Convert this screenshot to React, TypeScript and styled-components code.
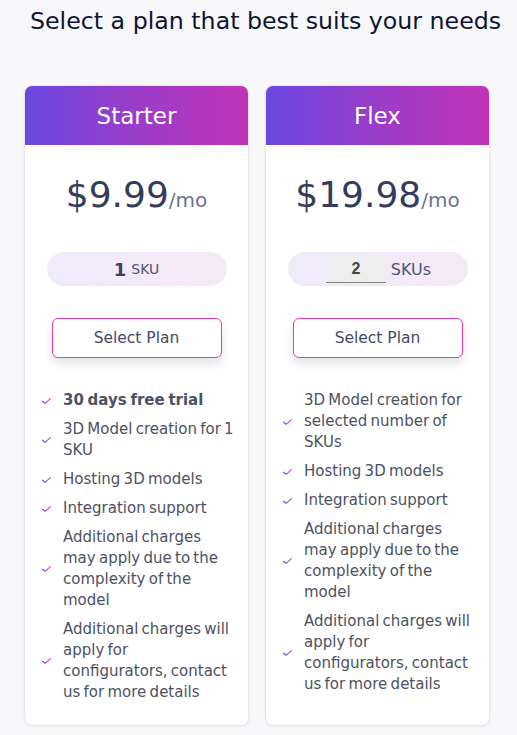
import React from "react";
import styled, { createGlobalStyle } from "styled-components";

const GlobalStyle = createGlobalStyle`
  html, body { margin: 0; padding: 0; background: #f8f8fb; }
  body { font-family: "DejaVu Sans", "Liberation Sans", sans-serif; }
  * { box-sizing: border-box; }
`;

const Page = styled.div`
  width: 517px;
  min-height: 735px;
  background: #f8f8fb;
  padding: 4px 0 11px;
`;

const Title = styled.h1`
  margin: 0 0 0 30px;
  font-size: 23.7px;
  font-weight: 400;
  color: #0d1433;
  line-height: 34px;
  white-space: nowrap;
`;

const Grid = styled.div`
  display: grid;
  grid-template-columns: 225px 225px;
  gap: 16px;
  margin: 47px 0 0 24px;
`;

const Card = styled.div`
  background: #ffffff;
  border: 1px solid #e6e7ec;
  border-radius: 8px;
  box-shadow: 0 1px 3px rgba(15, 23, 42, 0.06);
  overflow: hidden;
  display: flex;
  flex-direction: column;
`;

const Header = styled.div`
  height: 59px;
  background: linear-gradient(90deg, #6a48e0 0%, #9b3cc9 50%, #c234b6 100%);
  color: #ffffff;
  font-size: 23px;
  display: flex;
  align-items: center;
  justify-content: center;
`;

const Price = styled.div`
  margin-top: 28px;
  text-align: center;
  color: #333d5a;
  font-size: 36px;
  line-height: 44px;
  white-space: nowrap;
`;

const Per = styled.span`
  font-size: 20px;
  line-height: 1;
  color: #6b7490;
`;

const Pill = styled.div`
  margin: 35px auto 0;
  width: 180px;
  height: 34px;
  border-radius: 17px;
  background: linear-gradient(90deg, #efebfb 0%, #f6e9f7 100%);
  display: flex;
  align-items: center;
  justify-content: center;
  gap: 5px;
`;

const SkuCount = styled.span`
  font-size: 18px;
  font-weight: 700;
  color: #3a4260;
`;

const SkuLabel = styled.span<{ $size: number }>`
  font-size: ${(p) => p.$size}px;
  color: #4d5573;
`;

const SkuInput = styled.div`
  width: 60px;
  height: 27px;
  background: #eeeeee;
  border-bottom: 1px solid #808080;
  display: flex;
  align-items: center;
  justify-content: center;
  font-family: "Liberation Sans", Arial, sans-serif;
  font-weight: 700;
  font-size: 16px;
  color: #444444;
  margin-left: 2px;
`;

const SelectButton = styled.button`
  display: block;
  margin: 32px auto 0;
  width: 170px;
  height: 40px;
  background: #ffffff;
  border: 1px solid #e03cbd;
  border-radius: 6px;
  box-shadow: 0 6px 10px rgba(30, 30, 60, 0.12);
  font-family: inherit;
  font-size: 15.5px;
  color: #434a66;
  cursor: pointer;
`;

const List = styled.ul`
  list-style: none;
  margin: 32px 0 0;
  padding: 0 12.5px 22px 17px;
  display: flex;
  flex-direction: column;
  gap: 8px;
`;

const Item = styled.li<{ $bold?: boolean }>`
  display: flex;
  align-items: center;
  gap: 12px;
  font-size: 15px;
  line-height: 21px;
  word-spacing: -1.5px;
  color: #4d5262;
  font-weight: ${(p) => (p.$bold ? 700 : 400)};
`;

const ItemText = styled.span`
  flex: 1;
  min-width: 0;
`;

const CheckWrap = styled.span`
  flex: 0 0 9px;
  display: flex;
  align-items: center;
`;

const Check = ({ id }: { id: string }) => (
  <CheckWrap>
    <svg width="9" height="6" viewBox="0 0 9 6">
      <defs>
        <linearGradient id={id} x1="0" y1="0" x2="1" y2="0">
          <stop offset="0" stopColor="#6a48e0" />
          <stop offset="1" stopColor="#e23cc0" />
        </linearGradient>
      </defs>
      <path d="M0.6 3.2 L3.2 5.3 L8.4 0.7" fill="none" stroke={`url(#${id})`} strokeWidth="1.1" strokeLinecap="round" strokeLinejoin="round" />
    </svg>
  </CheckWrap>
);

type Feature = { text: string; bold?: boolean };

const starter: Feature[] = [
  { text: "30 days free trial", bold: true },
  { text: "3D Model creation for 1 SKU" },
  { text: "Hosting 3D models" },
  { text: "Integration support" },
  { text: "Additional charges may apply due to the complexity of the model" },
  { text: "Additional charges will apply for configurators, contact us for more details" },
];

const flex: Feature[] = [
  { text: "3D Model creation for selected number of SKUs" },
  { text: "Hosting 3D models" },
  { text: "Integration support" },
  { text: "Additional charges may apply due to the complexity of the model" },
  { text: "Additional charges will apply for configurators, contact us for more details" },
];

const Features = ({ items, prefix }: { items: Feature[]; prefix: string }) => (
  <List>
    {items.map((f, i) => (
      <Item key={i} $bold={f.bold}>
        <Check id={`${prefix}-${i}`} />
        <ItemText>{f.text}</ItemText>
      </Item>
    ))}
  </List>
);

export default function App() {
  return (
    <>
      <GlobalStyle />
      <Page>
        <Title>Select a plan that best suits your needs</Title>
        <Grid>
          <Card>
            <Header>Starter</Header>
            <Price>
              $9.99<Per>/mo</Per>
            </Price>
            <Pill>
              <SkuCount>1</SkuCount>
              <SkuLabel $size={14}>SKU</SkuLabel>
            </Pill>
            <SelectButton>Select Plan</SelectButton>
            <Features items={starter} prefix="s" />
          </Card>
          <Card>
            <Header>Flex</Header>
            <Price>
              $19.98<Per>/mo</Per>
            </Price>
            <Pill>
              <SkuInput>2</SkuInput>
              <SkuLabel $size={16}>SKUs</SkuLabel>
            </Pill>
            <SelectButton>Select Plan</SelectButton>
            <Features items={flex} prefix="f" />
          </Card>
        </Grid>
      </Page>
    </>
  );
}
